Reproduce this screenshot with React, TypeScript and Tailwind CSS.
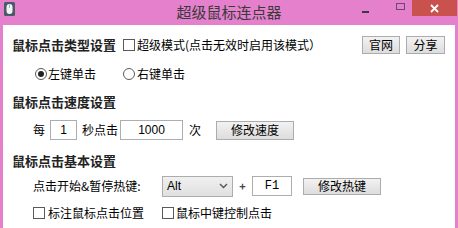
import React from "react";

const cjk = { fontFamily: '"Noto Sans CJK SC", "Liberation Sans", sans-serif' };

function Btn({ children, w, h = 18 }: { children: React.ReactNode; w: number; h?: number }) {
  return (
    <div
      className="flex items-center justify-center border border-[#acacac] bg-gradient-to-b from-[#f2f2f2] to-[#dddddd] text-[12px] text-black leading-none"
      style={{ width: w, height: h }}
    >
      {children}
    </div>
  );
}

function Check() {
  return <div className="w-[12px] h-[12px] border border-[#5a5a5a] bg-white shrink-0" />;
}

function Radio({ on }: { on?: boolean }) {
  return (
    <div className="w-[12px] h-[12px] rounded-full border border-[#5a5a5a] bg-white shrink-0 flex items-center justify-center">
      {on && <div className="w-[6px] h-[6px] rounded-full bg-[#222]" />}
    </div>
  );
}

export default function App() {
  return (
    <div className="w-[458px] h-[228px] bg-[#e480cc] flex flex-col overflow-hidden text-black" style={cjk}>
      {/* title bar */}
      <div className="h-[25px] relative flex items-center shrink-0">
        <div className="absolute left-[4px] top-[2px]">
          <svg width="11" height="14" viewBox="0 0 11 14">
            <rect x="0" y="0" width="11" height="14" rx="1.5" fill="#4a5a66" />
            <rect x="2.5" y="2" width="6" height="10" rx="3" fill="#f4f4f4" />
            <line x1="5.5" y1="2.5" x2="5.5" y2="6" stroke="#9aa" strokeWidth="0.8" />
          </svg>
        </div>
        <div className="absolute left-0 right-0 top-[3px] text-center text-[15px] leading-[18px] text-[#3a3a3a]">超级鼠标连点器</div>
        <div className="absolute left-[362px] top-[11px] w-[7px] h-[2px] bg-[#3c3c3c]" />
        <div className="absolute left-[396px] top-[3px] w-[9px] h-[7px] border border-[#6a4a6a]" />
        <div className="absolute left-[412px] top-0 w-[45px] h-[16px] bg-[#c9524f] flex items-center justify-center">
          <svg width="9" height="9" viewBox="0 0 9 9">
            <path d="M1 1 L8 8 M8 1 L1 8" stroke="#fff" strokeWidth="1.8" />
          </svg>
        </div>
      </div>
      {/* body */}
      <div className="flex-1 ml-[3px] mr-[3px] bg-white flex flex-col pl-[9px] text-[12px]">
        {/* row1 */}
        <div className="mt-[10px] h-[20px] flex items-center">
          <div className="w-[111px] font-bold text-[13px] text-[#222]">鼠标点击类型设置</div>
          <Check />
          <div className="ml-[2px] w-[225px] whitespace-nowrap">超级模式(点击无效时启用该模式）</div>
          <Btn w={38}>官网</Btn>
          <div className="w-[6px]" />
          <Btn w={39}>分享</Btn>
        </div>
        {/* radio row */}
        <div className="mt-[9px] h-[20px] flex items-center pl-[23px]">
          <Radio on />
          <div className="ml-[1px] w-[75px]">左键单击</div>
          <Radio />
          <div className="ml-[2px]">右键单击</div>
        </div>
        {/* heading2 */}
        <div className="mt-[8px] h-[20px] flex items-center font-bold text-[13px] text-[#222]">鼠标点击速度设置</div>
        {/* row4 */}
        <div className="mt-[8px] h-[20px] flex items-center">
          <div className="ml-[21px] w-[17px]">每</div>
          <div className="w-[27px] h-[20px] border border-[#abadb3] flex items-center justify-center text-[12px]" style={{ fontFamily: '"Liberation Sans", sans-serif' }}>1</div>
          <div className="ml-[5px] w-[38px]">秒点击</div>
          <div className="w-[63px] h-[20px] border border-[#abadb3] flex items-center justify-center text-[12px]" style={{ fontFamily: '"Liberation Sans", sans-serif' }}>1000</div>
          <div className="ml-[6px] w-[27px]">次</div>
          <Btn w={78} h={19}>修改速度</Btn>
        </div>
        {/* heading3 */}
        <div className="mt-[11px] h-[20px] flex items-center font-bold text-[13px] text-[#222]">鼠标点击基本设置</div>
        {/* row6 */}
        <div className="mt-[5px] h-[20px] flex items-center">
          <div className="ml-[21px] w-[129px] whitespace-nowrap">点击开始&amp;暂停热键:</div>
          <div className="w-[71px] h-[21px] border border-[#acacac] bg-gradient-to-b from-[#f0f0f0] to-[#e0e0e0] flex items-center justify-between pl-[4px] pr-[4px]">
            <span className="text-[12px]" style={{ fontFamily: '"Liberation Sans", sans-serif' }}>Alt</span>
            <svg width="9" height="6" viewBox="0 0 9 6">
              <path d="M1 1 L4.5 4.5 L8 1" stroke="#555" strokeWidth="1.4" fill="none" />
            </svg>
          </div>
          <div className="w-[19px] text-center text-[11px] font-bold text-[#444]">+</div>
          <div className="w-[40px] h-[20px] border border-[#abadb3] flex items-center justify-center text-[12px]" style={{ fontFamily: '"Liberation Mono", monospace' }}>F1</div>
          <div className="w-[11px]" />
          <Btn w={78} h={17}>修改热键</Btn>
        </div>
        {/* row7 */}
        <div className="mt-[7px] h-[20px] flex items-center pl-[21px]">
          <Check />
          <div className="ml-[3px] w-[114px]">标注鼠标点击位置</div>
          <Check />
          <div className="ml-[2px]">鼠标中键控制点击</div>
        </div>
      </div>
    </div>
  );
}
